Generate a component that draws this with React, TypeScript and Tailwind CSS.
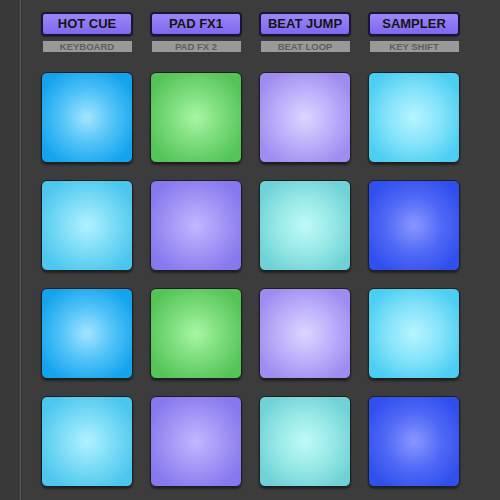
import React from "react";

const buttons = [
  { top: "HOT CUE", bottom: "KEYBOARD" },
  { top: "PAD FX1", bottom: "PAD FX 2" },
  { top: "BEAT JUMP", bottom: "BEAT LOOP" },
  { top: "SAMPLER", bottom: "KEY SHIFT" },
];

const blue = "bg-[radial-gradient(circle_at_50%_50%,#a4e4ff_0%,#54c4f8_40%,#14a4ee_82%)]";
const green = "bg-[radial-gradient(circle_at_50%_50%,#a8f6a4_0%,#78da78_45%,#55c458_82%)]";
const lav = "bg-[radial-gradient(circle_at_50%_50%,#dcd6ff_0%,#bcaefa_45%,#a08cf0_82%)]";
const cyan = "bg-[radial-gradient(circle_at_50%_50%,#b8f4ff_0%,#82e2fa_45%,#4ccef2_82%)]";
const cyan2 = "bg-[radial-gradient(circle_at_50%_50%,#b0f2ff_0%,#78daf6_45%,#4cc6ee_82%)]";
const purple = "bg-[radial-gradient(circle_at_50%_50%,#c0b8ff_0%,#a094f6_45%,#8678ee_82%)]";
const teal = "bg-[radial-gradient(circle_at_50%_50%,#c0faf8_0%,#96e8e6_45%,#70d2d6_82%)]";
const deep = "bg-[radial-gradient(circle_at_50%_50%,#8898ff_0%,#5068f6_45%,#3050ee_82%)]";

const pads = [
  blue, green, lav, cyan,
  cyan2, purple, teal, deep,
  blue, green, lav, cyan,
  cyan2, purple, teal, deep,
];

export default function App() {
  return (
    <div className="w-[500px] h-[500px] overflow-hidden bg-[#3c3c3c] flex" style={{ fontFamily: '"Liberation Sans", Arial, sans-serif' }}>
      <div className="w-[20px] h-full bg-[#393939]" />
      <div className="w-[1px] h-full bg-[#5c5c5c]" />
      <div className="w-[1px] h-full bg-[#333333]" />
      <div className="flex flex-col pl-[19px] pt-[12px]">
        <div className="grid grid-cols-[repeat(4,92px)] gap-x-[17px]">
          {buttons.map((b) => (
            <div key={b.top} className="flex flex-col items-center">
              <div className="w-[92px] h-[24px] rounded-[4px] border-2 border-[#1c1436] bg-[linear-gradient(180deg,#9c88f8_0%,#8066ee_100%)] flex items-center justify-center text-[13px] font-bold text-[#151515] shadow-[0_1px_1px_rgba(0,0,0,0.4)]">
                {b.top}
              </div>
              <div className="mt-[5px] w-[89px] h-[11px] bg-[#999999] flex items-center justify-center text-[9.5px] font-bold text-[#5e5e5e] leading-none">
                {b.bottom}
              </div>
            </div>
          ))}
        </div>
        <div className="mt-[20px] grid grid-cols-[repeat(4,92px)] auto-rows-[91px] gap-x-[17px] gap-y-[17px]">
          {pads.map((c, i) => (
            <div
              key={i}
              className={`rounded-[6px] border-[1.5px] border-[#1e1e1e] shadow-[0_2px_2px_rgba(0,0,0,0.45)] ${c}`}
            />
          ))}
        </div>
      </div>
    </div>
  );
}
